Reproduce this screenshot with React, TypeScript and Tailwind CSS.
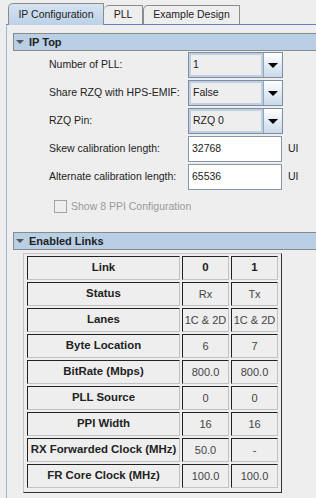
import { ReactNode } from 'react';

const ROWS: { label: string; values: [string, string]; head?: boolean }[] = [
  { label: 'Link', values: ['0', '1'], head: true },
  { label: 'Status', values: ['Rx', 'Tx'] },
  { label: 'Lanes', values: ['1C & 2D', '1C & 2D'] },
  { label: 'Byte Location', values: ['6', '7'] },
  { label: 'BitRate (Mbps)', values: ['800.0', '800.0'] },
  { label: 'PLL Source', values: ['0', '0'] },
  { label: 'PPI Width', values: ['16', '16'] },
  { label: 'RX Forwarded Clock (MHz)', values: ['50.0', '-'] },
  { label: 'FR Core Clock (MHz)', values: ['100.0', '100.0'] },
];

function SectionHeader({ title }: { title: string }) {
  return (
    <div className="flex h-[18px] items-center border border-r-0 border-[#8a8a8a] bg-[#b8cfe5]">
      <span className="ml-[2px] h-0 w-0 border-x-[4px] border-t-[4px] border-x-transparent border-t-[#555]" />
      <span className="ml-[5px] text-[11px] font-bold text-[#222]">{title}</span>
    </div>
  );
}

function Row({ label, children }: { label: string; children: ReactNode }) {
  return (
    <div className="flex h-[26px] items-center">
      <span className="ml-[36px] w-[139px] text-[#222]">{label}</span>
      {children}
    </div>
  );
}

function Combo({ value }: { value: string }) {
  return (
    <div className="flex h-[26px] w-[95px] border border-[#7d8ea3]">
      <div className="flex flex-1 items-center border-2 border-[#c0d0e0] bg-[#eeeeee] pl-[2px] text-[#222]">
        {value}
      </div>
      <div className="flex w-[19px] items-center justify-center border-l border-[#8ea4bc] bg-gradient-to-b from-[#ffffff] to-[#c8d9ea]">
        <span className="h-0 w-0 border-x-[5px] border-t-[5px] border-x-transparent border-t-black" />
      </div>
    </div>
  );
}

function Field({ value }: { value: string }) {
  return (
    <>
      <div className="flex h-[26px] w-[94px] items-center border border-[#8796a8] bg-white pl-[3px] text-[#222]">
        {value}
      </div>
      <span className="ml-[6px] text-[#222]">UI</span>
    </>
  );
}

function Cell({ children, bold, w }: { children: ReactNode; bold?: boolean; w: string }) {
  return (
    <div
      className={`${w} flex h-[24px] items-center justify-center whitespace-nowrap border-t border-l border-b border-r border-t-[#222] border-l-[#222] border-b-[#c2c2c2] border-r-[#c2c2c2] ${
        bold ? 'text-[11.4px] font-bold text-[#222]' : 'text-[11px] text-[#444]'
      }`}
    >
      {children}
    </div>
  );
}

export default function App() {
  return (
    <div className="h-[498px] w-[316px] overflow-hidden bg-[#eeeeee] font-['Liberation_Sans',Arial,sans-serif] text-[10.5px]">
      {/* tabs */}
      <div className="flex h-[24px] items-end pl-[8px]">
        <div className="relative z-10 -mb-px flex h-[22px] w-[96px] items-center justify-center rounded-tl-[5px] border border-b-0 border-[#8c8c8c] bg-gradient-to-b from-[#d6e3f1] to-[#bcd1e8] text-[#222]">
          IP Configuration
        </div>
        <div className="flex h-[19px] w-[39px] items-center justify-center rounded-tl-[5px] border border-b-0 border-l-0 border-[#8c8c8c] text-[#222]">
          PLL
        </div>
        <div className="flex h-[19px] w-[97px] items-center justify-center rounded-tl-[5px] border border-b-0 border-[#8c8c8c] text-[#222]">
          Example Design
        </div>
      </div>

      {/* panel */}
      <div className="ml-[6px] h-[474px] border-t border-l border-t-[#6382bf] border-l-[#9fb6d6] pl-[6px] pt-[8px]">
        <SectionHeader title="IP Top" />
        <div className="mt-[1px] flex flex-col gap-[2px]">
          <Row label="Number of PLL:">
            <Combo value="1" />
          </Row>
          <Row label="Share RZQ with HPS-EMIF:">
            <Combo value="False" />
          </Row>
          <Row label="RZQ Pin:">
            <Combo value="RZQ 0" />
          </Row>
          <Row label="Skew calibration length:">
            <Field value="32768" />
          </Row>
          <Row label="Alternate calibration length:">
            <Field value="65536" />
          </Row>
        </div>

        <div className="ml-[41px] mt-[9px] flex items-center">
          <span className="h-[13px] w-[13px] border border-[#a3a3a3]" />
          <span className="ml-[4px] text-[#999]">Show 8 PPI Configuration</span>
        </div>

        <div className="mt-[17px]">
          <SectionHeader title="Enabled Links" />
        </div>

        <div className="ml-[10px] mt-[3px] flex h-[240px] w-[259px] flex-col gap-[2px] border border-t-[#c4c4c4] border-l-[#c4c4c4] border-r-[#333] border-b-[#333] pl-[3px] pt-[2px]">
          {ROWS.map((row) => (
            <div key={row.label} className="flex gap-[2px]">
              <Cell w="w-[153px]" bold>
                {row.label}
              </Cell>
              <Cell w="w-[47px]" bold={row.head}>
                {row.values[0]}
              </Cell>
              <Cell w="w-[47px]" bold={row.head}>
                {row.values[1]}
              </Cell>
            </div>
          ))}
        </div>
      </div>
    </div>
  );
}
